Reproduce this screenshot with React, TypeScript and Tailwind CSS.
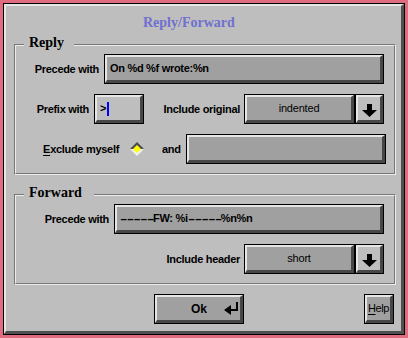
import React from "react";

const sans = "font-['Liberation_Sans',Arial,sans-serif]";
const serif = "font-['Liberation_Serif','Times_New_Roman',serif]";

function Field({
  width,
  fill,
  inner,
  children,
}: {
  width: string;
  fill: string;
  inner?: string;
  children?: React.ReactNode;
}) {
  return (
    <div className={`h-[30px] shrink-0 border border-black ${width}`}>
      <div
        className={`flex h-full items-center border-t-2 border-l-2 border-b-[3px] border-r-[3px] border-t-[#e6e6e6] border-l-[#e6e6e6] border-b-[#474747] border-r-[#474747] ${fill} ${inner ?? ""}`}
      >
        {children}
      </div>
    </div>
  );
}

function Label({ width, children }: { width: string; children: React.ReactNode }) {
  return (
    <div
      className={`${width} shrink-0 text-right text-[11px] font-bold tracking-[-0.3px] text-black ${sans} leading-[14px]`}
    >
      {children}
    </div>
  );
}

function DownArrow() {
  return (
    <svg width="15" height="13" viewBox="0 0 15 13" className="mt-[3px]">
      <rect x="5" y="0" width="5" height="6" fill="#000" />
      <polygon points="0,6 15,6 7.5,13" fill="#000" />
    </svg>
  );
}

function Combo({ value }: { value: string }) {
  return (
    <div className="flex shrink-0">
      <Field width="w-[111px]" fill="bg-[#a0a0a0]" inner="justify-center">
        <span className={`text-[11px] text-black ${sans} tracking-[-0.2px]`}>{value}</span>
      </Field>
      <Field width="w-[29px]" fill="bg-[#bebebe]" inner="justify-center">
        <DownArrow />
      </Field>
    </div>
  );
}

function Diamond() {
  return (
    <svg width="14" height="14" viewBox="0 0 14 14" className="shrink-0">
      <polygon points="0,7 7,0 14,7" fill="#4a4a4a" />
      <polygon points="0,7 7,14 14,7" fill="#efefef" />
      <polygon points="7,3 11,7 7,11 3,7" fill="#ffff00" />
    </svg>
  );
}

function ReturnIcon() {
  return (
    <svg width="15" height="14" viewBox="0 0 15 14" className="shrink-0">
      <polygon points="0,8 7,3 7,13" fill="#000" />
      <rect x="6" y="7" width="8" height="2" fill="#000" />
      <rect x="12" y="0" width="2" height="9" fill="#000" />
    </svg>
  );
}

function Dashes() {
  return (
    <span className="inline-block w-[33px] overflow-visible whitespace-pre">
      <span className="inline-block origin-left scale-x-[2]">-----</span>
    </span>
  );
}

function Group({
  title,
  legendPad,
  children,
}: {
  title: string;
  legendPad: string;
  children: React.ReactNode;
}) {
  return (
    <div className="relative ml-[8px] w-[382px] border border-t-[#787878] border-l-[#787878] border-b-[#ececec] border-r-[#ececec]">
      <div
        className={`absolute left-[9px] top-[-10px] bg-[#bebebe] pl-[5px] ${legendPad} text-[14px] font-bold leading-[16px] text-black ${serif}`}
      >
        {title}
      </div>
      <div className="flex flex-col gap-[10px] border border-t-[#ececec] border-l-[#ececec] border-b-[#787878] border-r-[#787878] pt-[8px] pb-[9px]">
        {children}
      </div>
    </div>
  );
}

export default function App() {
  return (
    <div className="h-[338px] w-[408px] bg-[#e06c80] p-[3px]">
      <div className="h-full border border-black">
        <div className="flex h-full flex-col border-t-2 border-l-2 border-b-[3px] border-r-[3px] border-t-[#e6e6e6] border-l-[#e6e6e6] border-b-[#505050] border-r-[#505050] bg-[#bebebe]">
          <div
            className={`mt-[9px] pl-[137px] text-[14px] font-bold leading-[16px] text-[#7070d0] ${serif}`}
          >
            Reply/Forward
          </div>

          <div className="mt-[13px]">
            <Group title="Reply" legendPad="pr-[10px]">
              <div className="flex h-[30px] items-center">
                <Label width="w-[83px]">Precede with</Label>
                <div className="ml-[5px]">
                  <Field width="w-[280px]" fill="bg-[#a0a0a0]" inner="pl-[3px]">
                    <span className={`text-[11px] font-bold tracking-[-0.3px] text-black ${sans}`}>
                      On %d %f wrote:%n
                    </span>
                  </Field>
                </div>
              </div>

              <div className="flex h-[30px] items-center">
                <Label width="w-[73px]">Prefix with</Label>
                <div className="ml-[5px]">
                  <Field width="w-[50px]" fill="bg-[#bebebe]" inner="pl-[3px]">
                    <span className={`text-[11px] font-bold text-black ${sans}`}>&gt;</span>
                    <span className="ml-[1px] h-[14px] w-[2px] bg-[#0000ff]" />
                  </Field>
                </div>
                <Label width="w-[96px]">Include original</Label>
                <div className="ml-[4px]">
                  <Combo value="indented" />
                </div>
              </div>

              <div className="flex h-[30px] items-center">
                <Label width="w-[103px]">
                  <span className="underline decoration-1 underline-offset-2">E</span>xclude myself
                </Label>
                <div className="ml-[11px]">
                  <Diamond />
                </div>
                <div
                  className={`ml-[18px] text-[11px] font-bold tracking-[-0.3px] text-black ${sans}`}
                >
                  and
                </div>
                <div className="ml-[5px]">
                  <Field width="w-[200px]" fill="bg-[#a0a0a0]" />
                </div>
              </div>
            </Group>
          </div>

          <div className="mt-[19px]">
            <Group title="Forward" legendPad="pr-[12px]">
              <div className="flex h-[30px] items-center">
                <Label width="w-[93px]">Precede with</Label>
                <div className="ml-[5px]">
                  <Field width="w-[270px]" fill="bg-[#a0a0a0]" inner="pl-[3px]">
                    <span
                      className={`whitespace-pre text-[11px] font-bold tracking-[-0.3px] text-black ${sans}`}
                    >
                      <Dashes />FW: %i<Dashes />%n%n
                    </span>
                  </Field>
                </div>
              </div>
              <div className="flex h-[30px] items-center">
                <Label width="w-[224px]">Include header</Label>
                <div className="ml-[4px]">
                  <Combo value="short" />
                </div>
              </div>
            </Group>
          </div>

          <div className="mt-[9px] flex">
            <div className="ml-[148px]">
              <Field width="w-[90px]" fill="bg-[#a0a0a0]" inner="pl-[34px]">
                <span className={`text-[12px] font-bold text-black ${sans}`}>Ok</span>
                <div className="ml-[17px] mt-[1px]">
                  <ReturnIcon />
                </div>
              </Field>
            </div>
            <div className="ml-[120px]">
              <Field width="w-[30px]" fill="bg-[#a0a0a0]" inner="justify-center">
                <span className={`text-[11px] tracking-[-0.4px] text-black ${sans}`}>
                  <span className="underline decoration-1 underline-offset-2">H</span>elp
                </span>
              </Field>
            </div>
          </div>
        </div>
      </div>
    </div>
  );
}
